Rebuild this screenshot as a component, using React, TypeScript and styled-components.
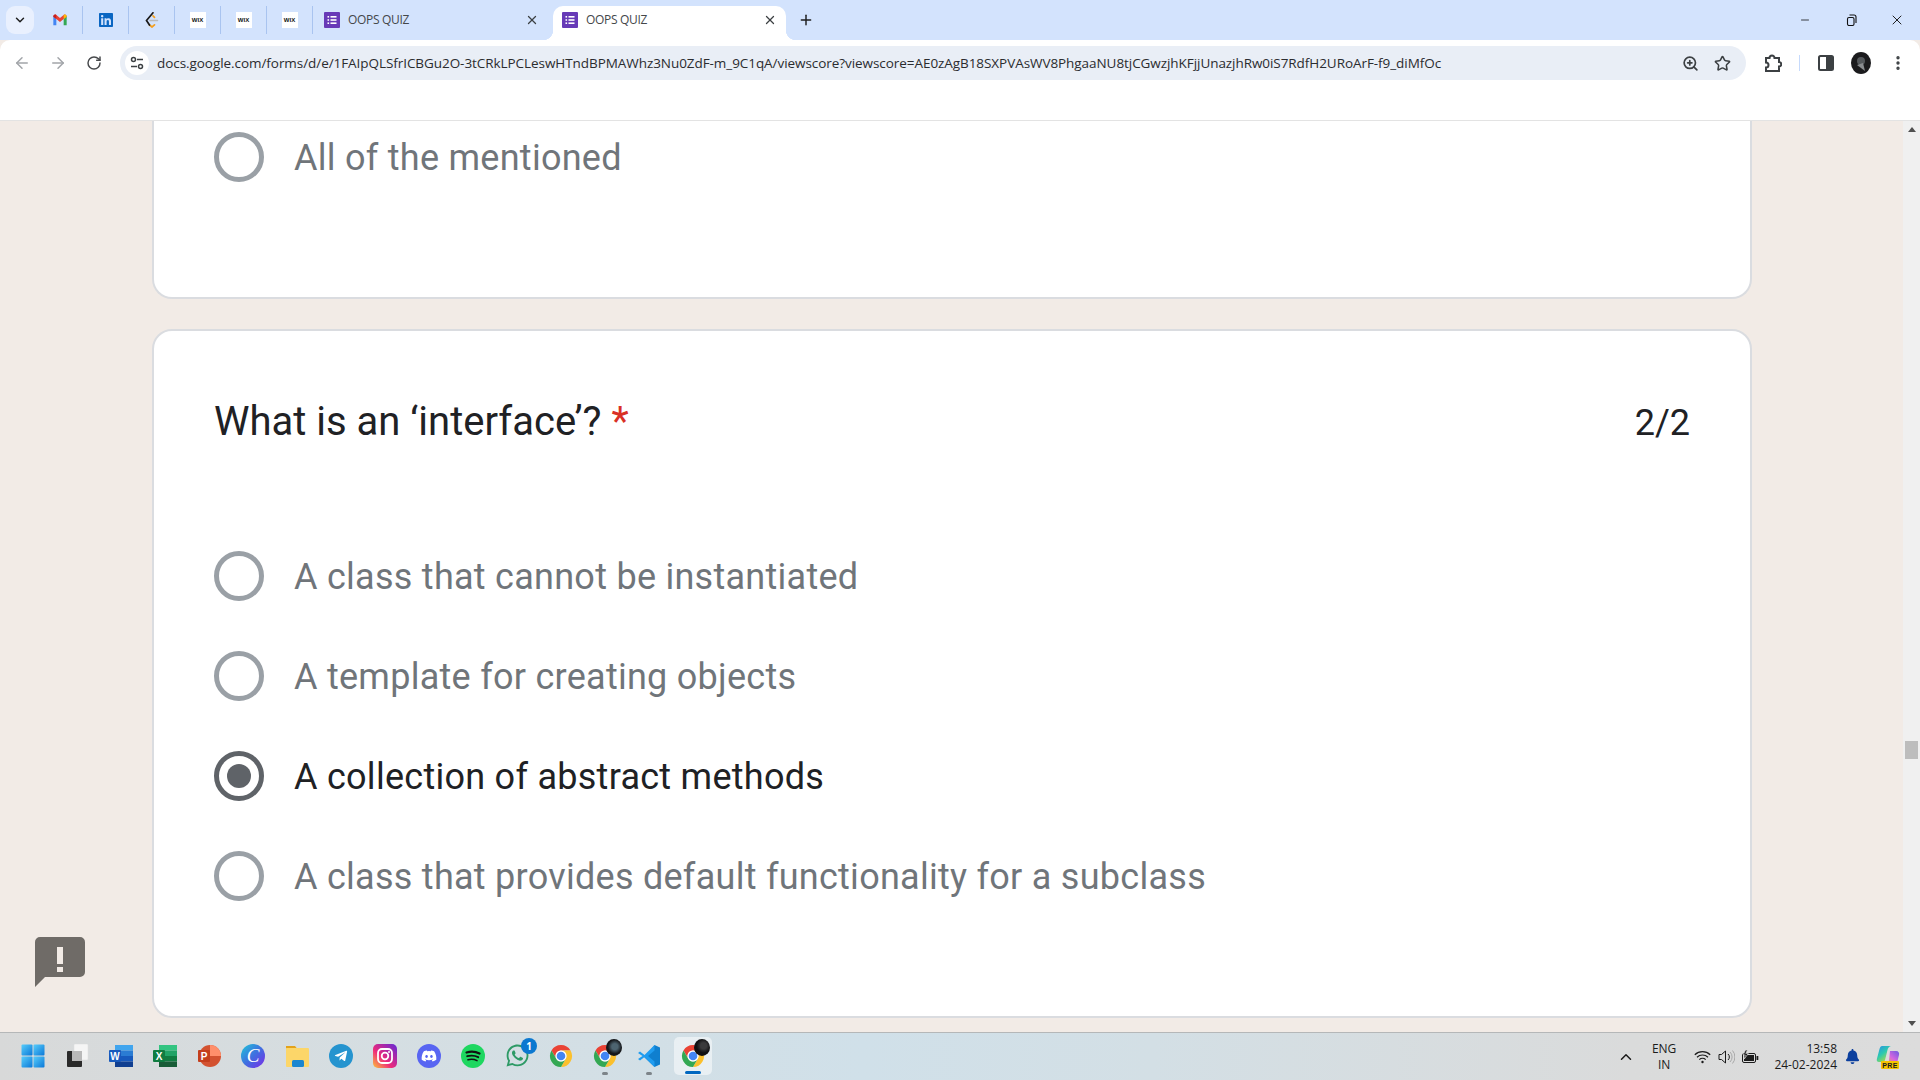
import React from "react";
import styled, { createGlobalStyle } from "styled-components";
import { ArrowLeft, ArrowRight, RotateCw, ChevronDown, ChevronUp, Plus, X, Minus, ZoomIn, Star, EllipsisVertical } from "lucide-react";
import { FaLinkedin, FaDiscord, FaWhatsapp, FaBell, FaTelegramPlane } from "react-icons/fa";

const Global = createGlobalStyle`
  html, body { margin: 0; padding: 0; height: 100%; overflow: hidden; background: #f2ebe6; }
  #root { height: 100%; }
  * { box-sizing: border-box; }
`;

const Screen = styled.div`
  width: 1920px;
  height: 1080px;
  display: flex;
  flex-direction: column;
  position: relative;
  overflow: hidden;
  font-family: "Roboto", "Liberation Sans", sans-serif;
`;

/* ---- tab strip ---- */
const TabStrip = styled.div`
  height: 40px;
  flex: none;
  background: #d3e3fd;
  display: flex;
  align-items: flex-end;
  padding-left: 6px;
`;
const TabSearch = styled.div`
  width: 28px;
  height: 28px;
  margin: 0 3px 6px 0;
  border-radius: 9px;
  background: #e9f0fe;
  display: flex;
  align-items: center;
  justify-content: center;
  color: #1f1f1f;
`;
const PinnedTab = styled.div`
  width: 46px;
  height: 28px;
  margin-bottom: 6px;
  display: flex;
  align-items: center;
  justify-content: center;
  border-right: 1px solid #a9c4f0;
`;
const WixIcon = styled.div`
  width: 16px;
  height: 16px;
  background: #fff;
  color: #111;
  font: 700 6px "Liberation Sans", sans-serif;
  display: flex;
  align-items: center;
  justify-content: center;
`;
const Tab = styled.div<{ $active?: boolean }>`
  width: ${(p) => (p.$active ? "233px" : "240px")};
  height: 34px;
  padding: 0 ${(p) => (p.$active ? "9px" : "14px")} 6px ${(p) => (p.$active ? "9px" : "11px")};
  border-radius: 10px 10px 0 0;
  background: ${(p) => (p.$active ? "#ffffff" : "transparent")};
  display: flex;
  align-items: center;
  gap: 8px;
  position: relative;
  color: #3c4043;
  &::before, &::after {
    content: "";
    display: ${(p) => (p.$active ? "block" : "none")};
    position: absolute;
    bottom: 0;
    width: 10px;
    height: 10px;
  }
  &::before { left: -10px; background: radial-gradient(circle at 0 0, #d3e3fd 10px, #fff 10.5px); }
  &::after { right: -10px; background: radial-gradient(circle at 100% 0, #d3e3fd 10px, #fff 10.5px); }
`;
const TabTitle = styled.span`
  flex: 1;
  font: 400 12px/16px "Open Sans", "Liberation Sans", sans-serif;
  letter-spacing: -0.3px;
  color: #44474a;
  white-space: nowrap;
`;
const NewTab = styled.div`
  width: 28px;
  height: 28px;
  margin: 0 0 6px 6px;
  display: flex;
  align-items: center;
  justify-content: center;
  color: #1f1f1f;
`;
const WindowControls = styled.div`
  margin-left: auto;
  height: 40px;
  display: flex;
  align-items: center;
`;
const WindowButton = styled.div`
  width: 46px;
  height: 40px;
  display: flex;
  align-items: center;
  justify-content: center;
  color: #111;
`;

/* ---- toolbar ---- */
const Toolbar = styled.div`
  height: 81px;
  flex: none;
  background: #fff;
  border-bottom: 1px solid #e3e3e3;
  border-radius: 10px 10px 0 0;
  padding: 6px 0 0 4px;
  display: flex;
  align-items: flex-start;
`;
const NavButton = styled.div<{ $muted?: boolean }>`
  width: 36px;
  height: 34px;
  display: flex;
  align-items: center;
  justify-content: center;
  color: ${(p) => (p.$muted ? "#a2a5a9" : "#47494c")};
`;
const Omnibox = styled.div`
  width: 1626px;
  height: 34px;
  margin-left: 8px;
  padding: 0 8px 0 5px;
  border-radius: 17px;
  background: #e9eef6;
  display: flex;
  align-items: center;
`;
const SiteInfo = styled.div`
  width: 24px;
  height: 24px;
  border-radius: 50%;
  background: #fff;
  display: flex;
  align-items: center;
  justify-content: center;
  flex: none;
`;
const Url = styled.div`
  margin-left: 8px;
  flex: 1;
  font: 400 13.5px/18px "Open Sans", "Liberation Sans", sans-serif;
  letter-spacing: -0.06px;
  color: #2b2c2f;
  white-space: nowrap;
  overflow: hidden;
`;
const OmniAction = styled.div`
  width: 32px;
  height: 32px;
  flex: none;
  display: flex;
  align-items: center;
  justify-content: center;
  color: #3c4043;
`;
const ToolAction = styled.div<{ $gap: number }>`
  width: 34px;
  height: 34px;
  margin-left: ${(p) => p.$gap}px;
  flex: none;
  display: flex;
  align-items: center;
  justify-content: center;
  color: #3c4043;
`;
const ToolDivider = styled.div`
  width: 1px;
  height: 16px;
  margin: 9px 0 0 9px;
  background: #c6dafc;
`;

/* ---- page ---- */
const Viewport = styled.div`
  flex: 1;
  min-height: 0;
  display: flex;
`;
const Page = styled.main`
  flex: 1;
  background: #f2ebe6;
  padding: 0 0 0 152px;
  display: flex;
  flex-direction: column;
  gap: 30px;
  overflow: hidden;
`;
const ClippedCard = styled.section`
  width: 1600px;
  height: 178px;
  flex: none;
  background: #fff;
  border: 2px solid #dadce0;
  border-top: none;
  border-radius: 0 0 20px 20px;
  padding: 11px 60px 0 60px;
`;
const Card = styled.section`
  width: 1600px;
  height: 689px;
  flex: none;
  background: #fff;
  border: 2px solid #dadce0;
  border-radius: 20px;
  padding: 60px 60px 0 60px;
`;
const QuestionHead = styled.div`
  display: flex;
  justify-content: space-between;
  align-items: center;
  height: 60px;
  margin-bottom: 75px;
`;
const QuestionTitle = styled.h2`
  margin: 0;
  padding-top: 1px;
  font: 400 40px/60px "Roboto", sans-serif;
  color: #202124;
`;
const Required = styled.span`
  color: #d93025;
`;
const Score = styled.div`
  font: 400 36px/60px "Roboto", sans-serif;
  color: #202124;
  padding-top: 3px;
`;
const OptionRow = styled.div`
  height: 100px;
  display: flex;
  align-items: center;
  gap: 30px;
`;
const ClippedRow = styled(OptionRow)`
  height: 50px;
`;
const Radio = styled.div<{ $on?: boolean }>`
  width: 50px;
  height: 50px;
  flex: none;
  border-radius: 50%;
  border: 5px solid ${(p) => (p.$on ? "#5f6368" : "#9aa0a6")};
  display: flex;
  align-items: center;
  justify-content: center;
`;
const RadioDot = styled.div`
  width: 24px;
  height: 24px;
  border-radius: 50%;
  background: #5f6368;
`;
const OptionLabel = styled.span<{ $on?: boolean }>`
  padding-top: 2px;
  font: 400 36px/50px "Roboto", sans-serif;
  letter-spacing: 0.27px;
  color: ${(p) => (p.$on ? "#202124" : "#70757a")};
`;
const Feedback = styled.div`
  position: absolute;
  left: 35px;
  top: 937px;
  width: 50px;
  height: 50px;
  color: #6f6b67;
`;

/* ---- scrollbar ---- */
const Scrollbar = styled.div`
  width: 17px;
  flex: none;
  background: #f0f0f0;
  display: flex;
  flex-direction: column;
  align-items: center;
  padding: 6px 0 6px;
`;
const ScrollArrow = styled.div<{ $down?: boolean }>`
  width: 0;
  height: 0;
  flex: none;
  border-left: 4px solid transparent;
  border-right: 4px solid transparent;
  ${(p) => (p.$down ? "border-top: 5px solid #505050;" : "border-bottom: 5px solid #505050;")}
`;
const ScrollTrack = styled.div`
  flex: 1;
  width: 100%;
  padding: 609px 2px 0;
`;
const ScrollThumb = styled.div`
  height: 18px;
  background: #bdbdbd;
`;

/* ---- taskbar ---- */
const Taskbar = styled.footer`
  height: 48px;
  flex: none;
  border-top: 1px solid #b5b7b8;
  background: linear-gradient(90deg, #d8d9d9 0%, #d5dee2 20%, #d0e0e9 45%, #d3dfe5 60%, #dadbdb 85%, #dcdcdc 100%);
  display: flex;
  align-items: center;
  padding-left: 11px;
  padding-right: 11px;
`;
const TaskSlot = styled.div<{ $active?: boolean }>`
  width: 44px;
  height: 47px;
  padding-bottom: 2px;
  flex: none;
  display: flex;
  align-items: center;
  justify-content: center;
  position: relative;
  isolation: isolate;
  ${(p) =>
    p.$active &&
    `
    &::before {
      content: "";
      position: absolute;
      z-index: -1;
      left: 3px;
      top: 4px;
      width: 38px;
      height: 38px;
      border-radius: 5px;
      background: rgba(255, 255, 255, 0.5);
    }
    &::after {
      content: "";
      position: absolute;
      left: 14px;
      bottom: 6px;
      width: 16px;
      height: 3px;
      border-radius: 2px;
      background: #0067c0;
    }
  `}
`;
const RunningDot = styled.div`
  position: absolute;
  left: 19px;
  bottom: 5px;
  width: 6px;
  height: 3px;
  border-radius: 2px;
  background: #7d8489;
`;
const Badge = styled.div`
  position: absolute;
  right: 2px;
  top: 5px;
  width: 16px;
  height: 16px;
  border-radius: 50%;
  background: #0b78d0;
  color: #fff;
  font: 700 10px/16px "Open Sans", sans-serif;
  text-align: center;
`;
const AvatarOverlay = styled.div<{ $light?: boolean }>`
  position: absolute;
  right: 5px;
  top: 6px;
  width: 16px;
  height: 17px;
  border-radius: 50%;
  background: ${(p) =>
    p.$light
      ? "radial-gradient(circle at 55% 45%, #4d6470 0 3px, #15171a 7px)"
      : "radial-gradient(circle at 60% 40%, #3a3a3c 0 3px, #101012 7px)"};
`;
const Tray = styled.div`
  margin-left: auto;
  display: flex;
  align-items: center;
  height: 47px;
  color: #1b1b1b;
`;
const TrayIcon = styled.div<{ $w: number }>`
  width: ${(p) => p.$w}px;
  display: flex;
  align-items: center;
  justify-content: center;
`;
const Lang = styled.div`
  width: 52px;
  text-align: center;
  font: 400 12px/16px "Open Sans", sans-serif;
  letter-spacing: -0.1px;
`;
const Clock = styled.div`
  width: 75px;
  text-align: right;
  font: 400 12px/16px "Open Sans", sans-serif;
  white-space: nowrap;
`;

/* ---- drawings ---- */
const Sheets = () => (
  <svg width="16" height="16" viewBox="0 0 16 16" style={{ flex: "none" }}>
    <rect width="16" height="16" rx="1" fill="#673ab7" />
    <g fill="#fff">
      <rect x="3.500" y="4" width="1.600" height="1.600" /><rect x="6.500" y="4" width="6" height="1.600" />
      <rect x="3.500" y="7.200" width="1.600" height="1.600" /><rect x="6.500" y="7.200" width="6" height="1.600" />
      <rect x="3.500" y="10.400" width="1.600" height="1.600" /><rect x="6.500" y="10.400" width="6" height="1.600" />
    </g>
  </svg>
);
const Gmail = () => (
  <svg width="16" height="16" viewBox="0 0 24 24">
    <path d="M2 6v14h4.500V10z" fill="#4285f4" />
    <path d="M22 6v14h-4.500V10z" fill="#34a853" />
    <path d="M2 7c0-3 2.500-4 4.500-2.500L12 9l5.500-4.500C19.500 3 22 4 22 7l-4.500 3.500L12 15l-5.500-4.500z" fill="#ea4335" />
    <path d="M17.500 4.500C19.500 3 22 4 22 7l-4.500 3.500z" fill="#fbbc04" />
    <path d="M6.500 4.500C4.500 3 2 4 2 7l4.500 3.500z" fill="#c5221f" />
  </svg>
);
const LeetCode = () => (
  <svg width="16" height="16" viewBox="0 0 16 16" fill="none" strokeLinecap="round" strokeWidth="1.700">
    <path d="M6 8.500h7.500" stroke="#b9b9b9" strokeWidth="1.500" />
    <path d="M5.500 13l2.500 2 2.500-2.200M9 3.800l1.500 1.500" stroke="#f59e1b" />
    <path d="M9 .8L2.500 8.500 5.500 13" stroke="#1a1a1a" />
  </svg>
);
const Puzzle = () => (
  <svg width="18" height="20" viewBox="0 0 18 20" fill="none" stroke="#3c4043" strokeWidth="2">
    <path d="M2 5h3.500a2.500 2.500 0 0 1 5 0H15v4a2.200 2.200 0 0 1 0 4.500V18H2v-3.500a2.500 2.500 0 0 0 0-5z" />
  </svg>
);
const Panel = () => (
  <svg width="16" height="16" viewBox="0 0 16 16">
    <rect x="1" y="1" width="14" height="14" rx="1.500" fill="none" stroke="#3c4043" strokeWidth="2" />
    <rect x="8" y="1" width="7" height="14" fill="#3c4043" />
  </svg>
);
const Avatar = () => (
  <svg width="20" height="22" viewBox="0 0 20 22">
    <ellipse cx="10" cy="11" rx="10" ry="11" fill="#1b1b1d" />
    <circle cx="10" cy="9" r="4" fill="#55595c" />
    <path d="M6 13l8 6-2-8z" fill="#8a8d90" />
  </svg>
);
const Tune = () => (
  <svg width="14" height="14" viewBox="0 0 14 14" fill="none" stroke="#3c4043" strokeWidth="1.500">
    <circle cx="3.500" cy="3.500" r="2" />
    <path d="M7 3.500h6M1 10.500h6" />
    <circle cx="10.500" cy="10.500" r="2" />
  </svg>
);
const Restore = () => (
  <svg width="11" height="12" viewBox="0 0 11 12" fill="none" stroke="#111" strokeWidth="1.100">
    <rect x="1.500" y="3.500" width="6.500" height="8" rx="1.500" />
    <path d="M3.500 1h4.500a2 2 0 0 1 2 2v6" />
  </svg>
);
const FeedbackIcon = () => (
  <svg width="50" height="50" viewBox="0 0 50 50">
    <path d="M5 0h40a5 5 0 0 1 5 5v30a5 5 0 0 1-5 5H10L0 50V5a5 5 0 0 1 5-5z" fill="currentColor" />
    <rect x="22" y="10" width="6" height="17" fill="#f2ebe6" />
    <rect x="22" y="30" width="6" height="5" fill="#f2ebe6" />
  </svg>
);
const WinLogo = () => (
  <svg width="24" height="24" viewBox="0 0 24 24">
    <defs>
      <linearGradient id="win" x1="0" y1="0" x2="1" y2="1">
        <stop offset="0" stopColor="#58cdfb" /><stop offset="1" stopColor="#0b78d8" />
      </linearGradient>
    </defs>
    <g fill="url(#win)">
      <rect x="0.500" y="0.500" width="11" height="11" rx="1" /><rect x="12.500" y="0.500" width="11" height="11" rx="1" />
      <rect x="0.500" y="12.500" width="11" height="11" rx="1" /><rect x="12.500" y="12.500" width="11" height="11" rx="1" />
    </g>
  </svg>
);
const TaskView = () => (
  <svg width="24" height="24" viewBox="0 0 24 24">
    <rect x="9" y="0" width="14" height="16" rx="1" fill="#f5f5f5" stroke="#ddd" strokeWidth="0.500" />
    <rect x="2" y="7" width="15" height="16" rx="1" fill="#2a2a2a" />
    <rect x="7" y="7" width="10" height="10" fill="#b9b9b9" />
  </svg>
);
const Office = ({ letter, tile, shades }: { letter: string; tile: string; shades: string[] }) => (
  <svg width="26" height="24" viewBox="0 0 26 24">
    {shades.map((c, i) => (
      <rect key={c} x="7" y={1 + i * 5.5} width="18" height="5.500" fill={c} />
    ))}
    <rect x="1" y="6" width="12" height="12" rx="1" fill={tile} />
    <text x="7" y="15.500" textAnchor="middle" fontFamily="Liberation Sans" fontSize="10" fontWeight="700" fill="#fff">{letter}</text>
  </svg>
);
const Ppt = () => (
  <svg width="26" height="24" viewBox="0 0 26 24">
    <circle cx="14" cy="12" r="11" fill="#d35230" />
    <path d="M14 1a11 11 0 0 1 11 11H14z" fill="#ff8f6b" />
    <rect x="2" y="6" width="12" height="12" rx="1" fill="#c43e1c" />
    <text x="8" y="15.500" textAnchor="middle" fontFamily="Liberation Sans" fontSize="10" fontWeight="700" fill="#fff">P</text>
  </svg>
);
const Canva = () => (
  <svg width="24" height="24" viewBox="0 0 24 24">
    <defs>
      <linearGradient id="canva" x1="0" y1="0" x2="1" y2="1">
        <stop offset="0" stopColor="#1fc8d8" /><stop offset="0.500" stopColor="#3f6fe0" /><stop offset="1" stopColor="#7d2ae8" />
      </linearGradient>
    </defs>
    <circle cx="12" cy="12" r="12" fill="url(#canva)" />
    <text x="12" y="18" textAnchor="middle" fontFamily="Liberation Serif" fontStyle="italic" fontSize="19" fill="#fff">C</text>
  </svg>
);
const Folder = () => (
  <svg width="25" height="24" viewBox="0 0 25 24">
    <path d="M1 2h9l2 2.500H1z" fill="#e3a21a" />
    <rect x="1" y="4" width="23" height="19" rx="1" fill="#fcd669" />
    <rect x="7" y="16" width="12" height="7" rx="1.500" fill="#1a86d0" />
  </svg>
);
const TelegramRound = styled.div`
  width: 24px;
  height: 24px;
  border-radius: 50%;
  background: #2594cf;
  color: #fff;
  display: flex;
  align-items: center;
  justify-content: center;
`;
const Insta = () => (
  <svg width="24" height="24" viewBox="0 0 24 24" fill="none">
    <defs>
      <linearGradient id="ig" x1="0" y1="1" x2="1" y2="0">
        <stop offset="0" stopColor="#fdc33a" /><stop offset="0.400" stopColor="#ee2a7b" /><stop offset="1" stopColor="#6228d7" />
      </linearGradient>
    </defs>
    <rect width="24" height="24" rx="5" fill="url(#ig)" />
    <rect x="5" y="5" width="14" height="14" rx="4" stroke="#fff" strokeWidth="1.800" />
    <circle cx="12" cy="12" r="3.300" stroke="#fff" strokeWidth="1.800" />
    <circle cx="16" cy="8" r="1" fill="#fff" />
  </svg>
);
const DiscordRound = styled.div`
  width: 24px;
  height: 24px;
  border-radius: 50%;
  background: #5865f2;
  color: #fff;
  display: flex;
  align-items: center;
  justify-content: center;
`;
const Spotify = () => (
  <svg width="24" height="24" viewBox="0 0 24 24" fill="none" stroke="#111" strokeLinecap="round">
    <circle cx="12" cy="12" r="12" fill="#1ed760" stroke="none" />
    <path d="M5.500 8.500c4.500-1.300 9-1 13 1" strokeWidth="2.200" />
    <path d="M6.200 12.200c4-1 7.800-.7 11 1" strokeWidth="1.900" />
    <path d="M7 15.700c3.400-.8 6.300-.5 9 .9" strokeWidth="1.600" />
  </svg>
);
const Chrome = () => (
  <svg width="24" height="24" viewBox="0 0 24 24">
    <path d="M21.530 6.500A11 11 0 0 0 2.470 6.500L7.240 14.750A5.500 5.500 0 0 1 12 6.500Z" fill="#ea4335" />
    <path d="M21.530 6.500H12A5.500 5.500 0 0 1 16.760 14.750L12 23A11 11 0 0 0 21.530 6.500Z" fill="#fbc02d" />
    <path d="M12 23L16.760 14.750A5.500 5.500 0 0 1 7.240 14.750L2.470 6.500A11 11 0 0 0 12 23Z" fill="#34a853" />
    <circle cx="12" cy="12" r="5.500" fill="#fff" />
    <circle cx="12" cy="12" r="4.300" fill="#4285f4" />
  </svg>
);
const VsCode = () => (
  <svg width="24" height="24" viewBox="0 0 24 24">
    <path d="M17.500 1L23 3.500v17L17.500 23 7 13l3.500-3z" fill="#0f7fcf" />
    <path d="M17.500 1L7.500 11 3 7.500 1 9l4.500 3L1 15l2 1.500L7.500 13 17.500 23V17.500L11 12l6.500-5.500z" fill="#1f9cf0" />
  </svg>
);
const Wifi = () => (
  <svg width="17" height="14" viewBox="0 0 17 14" fill="none" stroke="#1b1b1b" strokeWidth="1.200">
    <path d="M.8 4.700a11 11 0 0 1 15.400 0M3 7.200a8 8 0 0 1 11 0M5.300 9.600a4.600 4.600 0 0 1 6.400 0" />
    <circle cx="8.500" cy="12" r="1.200" fill="#1b1b1b" stroke="none" />
  </svg>
);
const Speaker = () => (
  <svg width="17" height="16" viewBox="0 0 17 16" fill="none" stroke="#1b1b1b" strokeWidth="1">
    <path d="M1 5.500h2.500L7.500 2v12l-4-3.500H1z" />
    <path d="M10 5a4 4 0 0 1 0 6" />
    <path d="M12 3a7 7 0 0 1 0 10M14.500 1.500a10 10 0 0 1 0 13" stroke="#a8a8a8" />
  </svg>
);
const Battery = () => (
  <svg width="18" height="14" viewBox="0 0 18 14">
    <rect x="1.500" y="3.500" width="13" height="9" rx="1.500" fill="none" stroke="#1b1b1b" />
    <rect x="3" y="5" width="10" height="6" fill="#1b1b1b" />
    <rect x="15.500" y="6" width="1.800" height="4" fill="#1b1b1b" />
    <path d="M4.500 0L2 5h2.300l-1 4 4-5.500H4.800L6.500 0z" fill="#1b1b1b" stroke="#dcdcdc" strokeWidth="0.700" />
  </svg>
);
const Copilot = () => (
  <svg width="24" height="24" viewBox="0 0 24 24">
    <defs>
      <linearGradient id="cop1" x1="0" y1="0" x2="0.700" y2="1">
        <stop offset="0" stopColor="#2a8fe6" /><stop offset="0.500" stopColor="#2cc9b0" /><stop offset="1" stopColor="#b8dc3c" />
      </linearGradient>
      <linearGradient id="cop2" x1="1" y1="0" x2="0" y2="1">
        <stop offset="0" stopColor="#6a5ae0" /><stop offset="0.550" stopColor="#d566e0" /><stop offset="1" stopColor="#f7a24a" />
      </linearGradient>
    </defs>
    <path d="M6 1h9c-2 .5-3 2-3.500 4L9 15c-.5 1.500-1.500 2-3 2H3C1 17 .3 15.500 1 13.500L3.500 4C4 2 5 1 6 1z" fill="url(#cop1)" />
    <path d="M14 6h6c2.500 0 3.500 2 3 4l-1.500 6c-.5 1.500-2 2-3.500 2h-8c1.500 0 2.500-1 3-2.500z" fill="url(#cop2)" />
    <rect x="5" y="16" width="18" height="8" rx="1" fill="#f5c400" />
    <text x="14" y="22.600" textAnchor="middle" fontFamily="Liberation Sans" fontSize="7" fontWeight="700" letterSpacing="0.4" fill="#1b1b1b">PRE</text>
  </svg>
);

const URL_TEXT =
  "docs.google.com/forms/d/e/1FAIpQLSfrICBGu2O-3tCRkLPCLeswHTndBPMAWhz3Nu0ZdF-m_9C1qA/viewscore?viewscore=AE0zAgB18SXPVAsWV8PhgaaNU8tjCGwzjhKFjjUnazjhRw0iS7RdfH2URoArF-f9_diMfOc";

const OPTIONS = [
  { label: "A class that cannot be instantiated" },
  { label: "A template for creating objects" },
  { label: "A collection of abstract methods", on: true },
  { label: "A class that provides default functionality for a subclass" },
];

export default function App() {
  return (
    <Screen>
      <Global />
      <TabStrip>
        <TabSearch><ChevronDown size={14} strokeWidth={2.5} /></TabSearch>
        <PinnedTab><Gmail /></PinnedTab>
        <PinnedTab><FaLinkedin size={16} color="#0a66c2" /></PinnedTab>
        <PinnedTab><LeetCode /></PinnedTab>
        <PinnedTab><WixIcon>WIX</WixIcon></PinnedTab>
        <PinnedTab><WixIcon>WIX</WixIcon></PinnedTab>
        <PinnedTab><WixIcon>WIX</WixIcon></PinnedTab>
        <Tab>
          <Sheets />
          <TabTitle>OOPS QUIZ</TabTitle>
          <X size={14} strokeWidth={2.2} />
        </Tab>
        <Tab $active>
          <Sheets />
          <TabTitle>OOPS QUIZ</TabTitle>
          <X size={14} strokeWidth={2.2} />
        </Tab>
        <NewTab><Plus size={16} strokeWidth={2.2} /></NewTab>
        <WindowControls>
          <WindowButton><Minus size={12} strokeWidth={1.6} /></WindowButton>
          <WindowButton><Restore /></WindowButton>
          <WindowButton><X size={16} strokeWidth={1.4} /></WindowButton>
        </WindowControls>
      </TabStrip>

      <Toolbar>
        <NavButton $muted><ArrowLeft size={18} strokeWidth={2} /></NavButton>
        <NavButton $muted><ArrowRight size={18} strokeWidth={2} /></NavButton>
        <NavButton><RotateCw size={16} strokeWidth={2.2} /></NavButton>
        <Omnibox>
          <SiteInfo><Tune /></SiteInfo>
          <Url>{URL_TEXT}</Url>
          <OmniAction><ZoomIn size={17} strokeWidth={2.4} /></OmniAction>
          <OmniAction><Star size={17} strokeWidth={2.2} /></OmniAction>
        </Omnibox>
        <ToolAction $gap={10}><Puzzle /></ToolAction>
        <ToolDivider />
        <ToolAction $gap={9}><Panel /></ToolAction>
        <ToolAction $gap={1}><Avatar /></ToolAction>
        <ToolAction $gap={3}><EllipsisVertical size={18} strokeWidth={2.5} /></ToolAction>
      </Toolbar>

      <Viewport>
        <Page>
          <ClippedCard>
            <ClippedRow>
              <Radio />
              <OptionLabel>All of the mentioned</OptionLabel>
            </ClippedRow>
          </ClippedCard>
          <Card>
            <QuestionHead>
              <QuestionTitle>
                What is an ‘interface’? <Required>*</Required>
              </QuestionTitle>
              <Score>2/2</Score>
            </QuestionHead>
            {OPTIONS.map((o) => (
              <OptionRow key={o.label}>
                <Radio $on={o.on}>{o.on && <RadioDot />}</Radio>
                <OptionLabel $on={o.on}>{o.label}</OptionLabel>
              </OptionRow>
            ))}
          </Card>
        </Page>
        <Scrollbar>
          <ScrollArrow />
          <ScrollTrack><ScrollThumb /></ScrollTrack>
          <ScrollArrow $down />
        </Scrollbar>
      </Viewport>

      <Feedback><FeedbackIcon /></Feedback>

      <Taskbar>
        <TaskSlot><WinLogo /></TaskSlot>
        <TaskSlot><TaskView /></TaskSlot>
        <TaskSlot><Office letter="W" tile="#185abd" shades={["#41a5ee", "#2b7cd3", "#185abd", "#103f91"]} /></TaskSlot>
        <TaskSlot><Office letter="X" tile="#107c41" shades={["#33c481", "#21a366", "#107c41", "#185c37"]} /></TaskSlot>
        <TaskSlot><Ppt /></TaskSlot>
        <TaskSlot><Canva /></TaskSlot>
        <TaskSlot><Folder /></TaskSlot>
        <TaskSlot><TelegramRound><FaTelegramPlane size={14} /></TelegramRound></TaskSlot>
        <TaskSlot><Insta /></TaskSlot>
        <TaskSlot><DiscordRound><FaDiscord size={16} /></DiscordRound></TaskSlot>
        <TaskSlot><Spotify /></TaskSlot>
        <TaskSlot><FaWhatsapp size={25} color="#2d9a66" /><Badge>1</Badge></TaskSlot>
        <TaskSlot><Chrome /></TaskSlot>
        <TaskSlot><Chrome /><AvatarOverlay $light /><RunningDot /></TaskSlot>
        <TaskSlot><VsCode /><RunningDot /></TaskSlot>
        <TaskSlot $active><Chrome /><AvatarOverlay /></TaskSlot>
        <Tray>
          <TrayIcon $w={24}><ChevronUp size={18} strokeWidth={2} /></TrayIcon>
          <Lang>ENG<br />IN</Lang>
          <TrayIcon $w={24}><Wifi /></TrayIcon>
          <TrayIcon $w={24}><Speaker /></TrayIcon>
          <TrayIcon $w={24}><Battery /></TrayIcon>
          <Clock>13:58<br />24-02-2024</Clock>
          <TrayIcon $w={30}><FaBell size={15} color="#0b3f9e" /></TrayIcon>
          <TrayIcon $w={42}><Copilot /></TrayIcon>
        </Tray>
      </Taskbar>
    </Screen>
  );
}
